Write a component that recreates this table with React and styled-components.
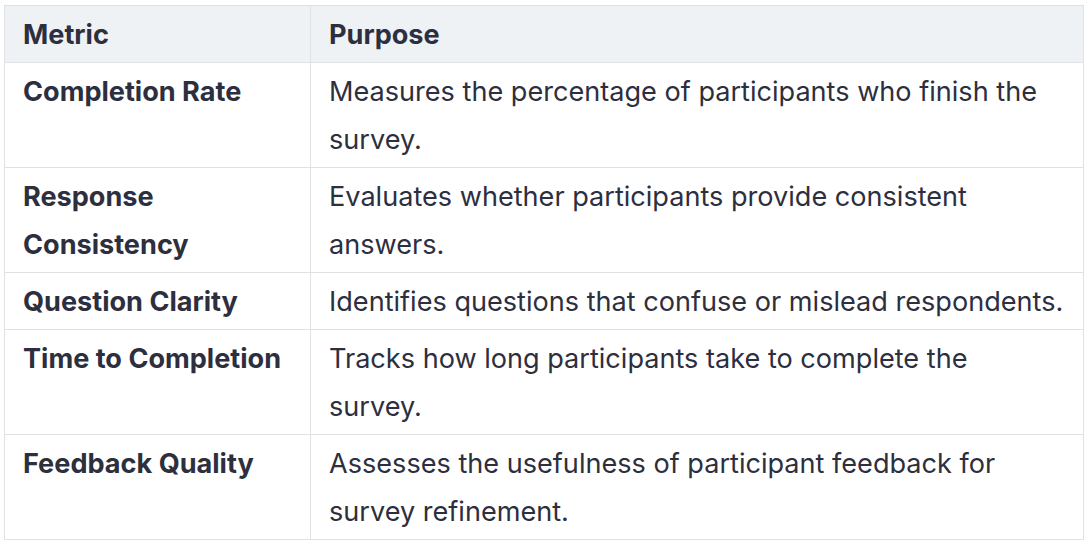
import * as React from 'react'
import styled, { createGlobalStyle } from 'styled-components'

const GlobalStyle = createGlobalStyle`
  body {
    margin: 0;
    background: #ffffff;
    font-family: Inter, "Noto Sans", sans-serif;
    color: #2d2f3e;
  }
`

const Page = styled.div`
  padding: 5px 8px 0 4px;
`

const Table = styled.table`
  width: 1080px;
  table-layout: fixed;
  border-collapse: collapse;
  font-size: 27.1px;
  line-height: 48px;
`

const Column = styled.col`
  width: ${props => props.$width || 'auto'};
`

const HeadCell = styled.th`
  text-align: left;
  font-weight: 650;
  background: #eff2f5;
  border: 1px solid #dfe1e5;
  padding: 5px 18px 3px;
`

const Cell = styled.td`
  border: 1px solid #dfe1e5;
  padding: 5px 18px 3px;
  vertical-align: top;
  font-weight: ${props => (props.$strong ? 650 : 400)};
`

const rows = [
  ['Completion Rate', 'Measures the percentage of participants who finish the survey.'],
  ['Response Consistency', 'Evaluates whether participants provide consistent answers.'],
  ['Question Clarity', 'Identifies questions that confuse or mislead respondents.'],
  ['Time to Completion', 'Tracks how long participants take to complete the survey.'],
  ['Feedback Quality', 'Assesses the usefulness of participant feedback for survey refinement.'],
]

export default function App() {
  return (
    <Page>
      <GlobalStyle />
      <Table>
        <colgroup>
          <Column $width="306px" />
          <Column />
        </colgroup>
        <thead>
          <tr>
            <HeadCell>Metric</HeadCell>
            <HeadCell>Purpose</HeadCell>
          </tr>
        </thead>
        <tbody>
          {rows.map(([metric, purpose]) => (
            <tr key={metric}>
              <Cell $strong>{metric}</Cell>
              <Cell>{purpose}</Cell>
            </tr>
          ))}
        </tbody>
      </Table>
    </Page>
  )
}
